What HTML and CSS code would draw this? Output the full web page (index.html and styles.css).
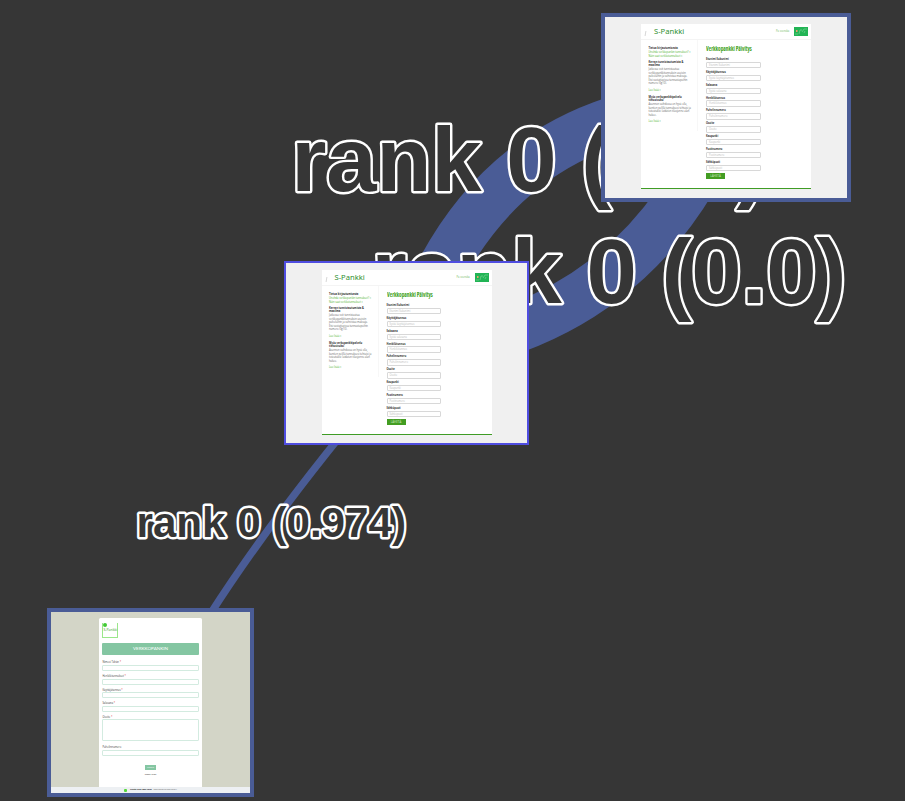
FILE: index.html
```html
<!DOCTYPE html>
<html lang="fi">
<head>
<meta charset="utf-8">
<title>Rank graph</title>
<link rel="stylesheet" href="styles.css">
</head>
<body>
<main class="graph">
  <svg class="edges" width="905" height="801" viewBox="0 0 905 801">
    <path class="edge wide" d="M407 353Q482 109 726 103"/>
    <path class="edge wide" d="M407 353Q642 329 728 107"/>
    <path class="edge thin" d="M342 434Q262 533 209 616"/>
    <text class="rank" x="291.3" y="190.5" font-size="90.5" textLength="475">rank 0 (0.0)</text>
    <text class="rank" x="371.5" y="302.7" font-size="90.5" textLength="475">rank 0 (0.0)</text>
    <text class="rank" x="136.5" y="537.2" font-size="42.2" textLength="269.5">rank 0 (0.974)</text>
  </svg>
  <section class="node bank-a"></section>
  <section class="node bank-b"></section>
  <section class="node form-node">
    <div class="sheet">
      <div class="brand"><i></i><b>S-Pankki</b></div>
      <h2>VERKKOPANKIN</h2>
      <label>Nimesi Tähän <em>*</em></label><div class="box"></div>
      <label>Henkilötunnukset <em>*</em></label><div class="box"></div>
      <label>Käyttäjätunnus <em>*</em></label><div class="box"></div>
      <label>Salasana <em>*</em></label><div class="box"></div>
      <label>Osoite <em>*</em></label><div class="box area"></div>
      <label>Puhelinnumero</label><div class="box"></div>
      <div class="send">Lähetä</div>
      <div class="report">Report Abuse</div>
    </div>
    <footer><i></i><span><b>Create your own form</b> · emailmeform.com form »</span></footer>
  </section>
</main>
<template id="bank">
  <div class="panel">
    <header><span class="slash"></span><strong>S-Pankki</strong><span class="lang">På svenska</span>
      <svg class="card" width="14" height="9" viewBox="0 0 14 9"><rect width="14" height="9" fill="#22b455"/><path d="M2 3h1.5v2H2z" fill="#e6a26e"/><path d="M5 7l1-4h2M8 5l2-3h3M1 7h3M10 6l1-2" stroke="#83d69b" stroke-width=".6" fill="none"/></svg>
    </header>
    <div class="cols">
      <aside>
        <h4>Tietoa kirjautumisesta</h4>
        <p class="link">Unohda verkkopankin tunnukset? »<br>Näin saat verkkotunnukset »</p>
        <h4>Kerran tunnistautumista &amp;<br>maailma</h4>
        <p>Jatkossa voit tunnistautua<br>verkkopankkitunnuksin useisiin<br>palveluihin ja vahvistaa maksuja.<br>Etsi vastattavissa tunnustapoihin<br>numero (0g10).</p>
        <p class="link more">Lue lisää »</p>
        <h4>Myös verkopankkipalvelu<br>tietosivuksi</h4>
        <p>Asunnon vaihdossa on hyvä olla,<br>kuntien pelillä tunnuksesi tehtaisi ja<br>toteutuksi: laidaten tilasjonne alan<br>hakee.</p>
        <p class="link more">Lue lisää »</p>
      </aside>
      <div class="form">
        <h3>Verkkopankki Päivitys</h3>
        <div class="fields"></div>
        <div class="submit">LÄHETÄ</div>
      </div>
    </div>
  </div>
</template>
<script src="script.js"></script>
</body>
</html>
```
FILE: styles.css
```css
* { box-sizing: border-box; margin: 0; padding: 0; }
body { background: #363636; overflow: hidden; font-family: "Open Sans", "Noto Sans", sans-serif; }
.graph { position: relative; width: 905px; height: 801px; overflow: hidden; }
.edges { display: block; }
.edge { fill: none; stroke: #4a5c96; }
.wide { stroke-width: 49px; }
.thin { stroke-width: 7.5px; }
.rank { font-family: "Liberation Sans", sans-serif; font-weight: bold; fill: #363636; stroke: #fff; stroke-width: 4.8px; stroke-linejoin: round; paint-order: stroke; }

.node { position: absolute; background: #f0f0f0; border: 4px solid #4a5c96; overflow: hidden; }
.bank-a { left: 601px; top: 13px; width: 250px; height: 188.5px; padding: 7px 0 0 36px; }
.bank-b { left: 283.5px; top: 261px; width: 245.5px; height: 184px; border: 2px solid #4f4de0; padding: 7px 0 0 36px; }

.panel { width: 170px; height: 165px; background: #fff; border-bottom: 1px solid #3f9c25; }
.panel header { display: flex; align-items: center; height: 15.5px; border-bottom: 1px solid #f4f4f4; padding-left: 4px; }
.slash { width: 1px; height: 5px; margin-top: 4px; background: #d6d6d6; transform: skewX(-10deg); }
.panel strong { margin-left: 8px; width: 122px; font: 400 7.6px/14px "Noto Sans", sans-serif; color: #2f9030; flex: 1; }
.lang { font-size: 2.6px; color: #71ba62; width: 18px; }
.card { margin-right: 3px; }
.cols { display: flex; }
aside { width: 57px; height: 91px; border-right: 1px solid #f7f7f7; padding: 7.7px 0 0 7.5px; font-size: 2.55px; line-height: 3.4px; color: #666; white-space: nowrap; }
aside h4 { font-size: 2.6px; color: #333; margin-bottom: .9px; }
aside p { margin-bottom: 2.3px; }
aside .link { color: #4bb02d; }
aside .more { margin: 3.5px 0 3.4px; }
.form { width: 55px; margin-left: 8px; padding-top: 4px; }
.form h3 { font: bold 6.2px/9px "Open Sans", sans-serif; font-stretch: 75%; color: #3d9f20; white-space: nowrap; transform: scaleX(.86); transform-origin: 0 0; }
.fields { padding-top: 4.6px; }
.field { height: 12.83px; font: bold 2.55px/4px "Open Sans", sans-serif; color: #333; }
.input { width: 54.5px; height: 6.4px; margin-top: .9px; border: 1px solid #d8d8d8; border-radius: 1px; padding-left: 2px; font: 2.55px/4.4px "Open Sans", sans-serif; color: #bbb; }
.submit { width: 19px; height: 6px; margin-top: .5px; background: #439d22; color: #d9efcf; text-align: center; font-size: 2.9px; line-height: 6px; }

.form-node { left: 47px; top: 608px; width: 207px; height: 189px; background: #d3d5c7; display: flex; flex-direction: column; align-items: center; padding-top: 6px; }
.sheet { flex: none; width: 102.5px; height: 169px; background: #fff; border-radius: 1.5px 1.5px 0 0; padding: 4.5px 3.2px 0; }
.brand { width: 16px; height: 15.5px; border: 1px solid #9be78a; border-top: 0; font-size: 3.5px; line-height: 4px; color: #3b9d2b; }
.brand i { display: block; width: 4px; height: 4px; border-radius: 50%; background: #42ca35; }
.brand b { font-weight: normal; display: block; padding-top: 1.5px; }
.sheet h2 { margin: 5px 0 5.4px; height: 12px; background: #84c6a2; color: #fff; border-radius: 1px; text-align: center; font: 4.6px/11px Lato, sans-serif; }
.sheet label { display: block; height: 4px; margin-bottom: .7px; font-size: 2.6px; line-height: 4px; color: #444; }
.sheet em { color: #e04444; font-style: normal; }
.box { height: 6px; margin-bottom: 2.9px; border: 1px solid #d3ebe0; border-radius: 1px; }
.area { height: 22px; margin-bottom: 3.8px; }
.send { width: 11.5px; height: 5px; margin: 8.7px auto 3.5px; background: #84c6a2; color: #fff; font-size: 2.2px; line-height: 5px; text-align: center; }
.report { font-size: 1.8px; line-height: 4px; text-align: center; color: #222; }
.form-node footer { width: 100%; height: 6px; flex: none; background: #edf0f3; display: flex; align-items: center; justify-content: center; gap: 3px; font-size: 2px; line-height: 4px; color: #666; white-space: nowrap; }
footer i { width: 3px; height: 3px; border-radius: 1px; background: #55d83a; }
footer b { color: #222; }
```
FILE: script.js
```js
const fields = [
  ["Etunimi Sukunimi", "Etunimi Sukunimi"],
  ["Käyttäjätunnus", "Syötä käyttäjätunnus"],
  ["Salasana", "Syötä salasana"],
  ["Henkilötunnus", "Henkilötunnus"],
  ["Puhelinnumero", "Puhelinnumero"],
  ["Osoite", "Osoite"],
  ["Kaupunki", "Kaupunki"],
  ["Postinumero", "Postinumero"],
  ["Sähköposti", "Sähköposti"]
];
document.querySelectorAll(".bank-a, .bank-b").forEach(node => {
  node.append(document.getElementById("bank").content.cloneNode(true));
  node.querySelector(".fields").innerHTML = fields
    .map(([label, hint]) => `<div class="field">${label}<div class="input">${hint}</div></div>`)
    .join("");
});
```
